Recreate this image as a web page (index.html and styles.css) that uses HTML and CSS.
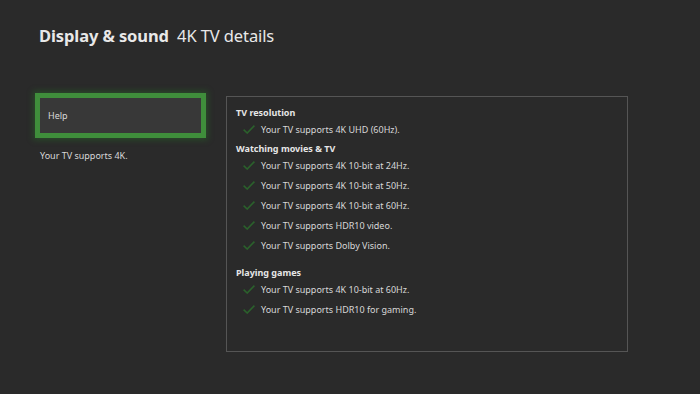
FILE: index.html
```html
<!DOCTYPE html>
<html lang="en">
<head>
    <meta charset="UTF-8">
    <title>Display &amp; sound - 4K TV details</title>
    <link rel="stylesheet" href="styles.css">
</head>
<body>
    <header class="header">
        <h1><span class="section">Display &amp; sound</span> <span class="page">4K TV details</span></h1>
    </header>

    <div class="layout">
        <aside class="side">
            <button class="help-btn">Help</button>
            <p class="summary">Your TV supports 4K.</p>
        </aside>

        <div class="details">
            <h2>TV resolution</h2>
            <ul>
                <li><svg class="check" viewBox="0 0 12 9"><path d="M0.6 4.6 L4.2 8 L11.4 0.6"/></svg>Your TV supports 4K UHD (60Hz).</li>
            </ul>

            <h2>Watching movies &amp; TV</h2>
            <ul>
                <li><svg class="check" viewBox="0 0 12 9"><path d="M0.6 4.6 L4.2 8 L11.4 0.6"/></svg>Your TV supports 4K 10-bit at 24Hz.</li>
                <li><svg class="check" viewBox="0 0 12 9"><path d="M0.6 4.6 L4.2 8 L11.4 0.6"/></svg>Your TV supports 4K 10-bit at 50Hz.</li>
                <li><svg class="check" viewBox="0 0 12 9"><path d="M0.6 4.6 L4.2 8 L11.4 0.6"/></svg>Your TV supports 4K 10-bit at 60Hz.</li>
                <li><svg class="check" viewBox="0 0 12 9"><path d="M0.6 4.6 L4.2 8 L11.4 0.6"/></svg>Your TV supports HDR10 video.</li>
                <li><svg class="check" viewBox="0 0 12 9"><path d="M0.6 4.6 L4.2 8 L11.4 0.6"/></svg>Your TV supports Dolby Vision.</li>
            </ul>

            <h2 class="gap">Playing games</h2>
            <ul>
                <li><svg class="check" viewBox="0 0 12 9"><path d="M0.6 4.6 L4.2 8 L11.4 0.6"/></svg>Your TV supports 4K 10-bit at 60Hz.</li>
                <li><svg class="check" viewBox="0 0 12 9"><path d="M0.6 4.6 L4.2 8 L11.4 0.6"/></svg>Your TV supports HDR10 for gaming.</li>
            </ul>
        </div>
    </div>
</body>
</html>
```

FILE: styles.css
```css
html, body {
    height: 100%;
}
body {
    font-family: "Noto Sans", "Liberation Sans", Arial, sans-serif;
    background-color: #2a2a2a;
    color: #e6e6e6;
    margin: 0;
    padding: 0;
    overflow: hidden;
}
.header {
    padding: 24px 0 0 39px;
    height: 72px;
    box-sizing: border-box;
}
.header h1 {
    margin: 0;
    font-size: 16.5px;
    line-height: 24px;
    font-weight: normal;
    color: #e8e8e8;
    letter-spacing: -0.1px;
}
.header .section {
    font-weight: bold;
    margin-right: 4px;
}
.layout {
    display: flex;
    padding-left: 35px;
    margin-top: 24px;
}
.side {
    width: 171px;
    margin-right: 20px;
}
.help-btn {
    display: block;
    width: 171px;
    height: 45px;
    box-sizing: border-box;
    background-color: #383838;
    border: 5px solid #3f8e3b;
    box-shadow: 0 0 6px 2px rgba(40, 110, 40, 0.45);
    color: #d8d8d8;
    font-family: inherit;
    font-size: 9px;
    text-align: left;
    padding: 0 0 0 8px;
    margin: -3px 0 0;
    cursor: pointer;
}
.summary {
    margin: 11px 0 0 5px;
    font-size: 9px;
    color: #d8d8d8;
}
.details {
    width: 402px;
    height: 256px;
    box-sizing: border-box;
    border: 1px solid #555;
    padding: 9px 0 0 9px;
}
.details h2 {
    margin: 0;
    font-size: 9px;
    line-height: 14px;
    font-weight: bold;
    color: #e6e6e6;
}
.details h2.gap {
    margin-top: 11px;
}
.details ul {
    list-style: none;
    margin: -1px 0 3px;
    padding: 0;
}
.details li {
    display: flex;
    align-items: center;
    height: 20px;
    font-size: 9px;
    color: #d8d8d8;
}
.check {
    width: 12px;
    height: 9px;
    margin: 0 6px 0 7px;
    fill: none;
    stroke: #2b612c;
    stroke-width: 1.6;
}
```
